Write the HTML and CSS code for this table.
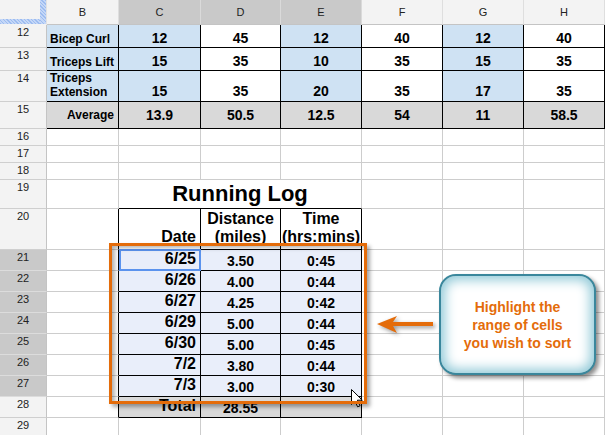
FILE: index.html
```html
<!DOCTYPE html>
<html>
<head>
<meta charset="utf-8">
<link rel="stylesheet" href="styles.css">
</head>
<body>
<div class="page">
  <div class="sheet">
    <!-- column headers -->
    <div class="c corner"></div>
    <div class="c h">B</div>
    <div class="c h hs">C</div>
    <div class="c h hs">D</div>
    <div class="c h hs">E</div>
    <div class="c h">F</div>
    <div class="c h">G</div>
    <div class="c h">H</div>

    <!-- row 12 -->
    <div class="c r">12</div>
    <div class="c t blue k">Bicep Curl</div>
    <div class="c n blue k">12</div>
    <div class="c n k">45</div>
    <div class="c n blue k">12</div>
    <div class="c n k">40</div>
    <div class="c n blue k">12</div>
    <div class="c n k">40</div>

    <!-- row 13 -->
    <div class="c r">13</div>
    <div class="c t blue k">Triceps Lift</div>
    <div class="c n blue k">15</div>
    <div class="c n k">35</div>
    <div class="c n blue k">10</div>
    <div class="c n k">35</div>
    <div class="c n blue k">15</div>
    <div class="c n k">35</div>

    <!-- row 14 -->
    <div class="c r">14</div>
    <div class="c t blue k low"><span>Triceps<br>Extension</span></div>
    <div class="c n blue k low">15</div>
    <div class="c n k low">35</div>
    <div class="c n blue k low">20</div>
    <div class="c n k low">35</div>
    <div class="c n blue k low">17</div>
    <div class="c n k low">35</div>

    <!-- row 15 -->
    <div class="c r">15</div>
    <div class="c t gray k mid ra">Average</div>
    <div class="c n gray k mid">13.9</div>
    <div class="c n gray k mid">50.5</div>
    <div class="c n gray k mid">12.5</div>
    <div class="c n gray k mid">54</div>
    <div class="c n gray k mid">11</div>
    <div class="c n gray k mid">58.5</div>

    <!-- row 16 -->
    <div class="c r">16</div>
    <div class="c"></div><div class="c"></div><div class="c"></div><div class="c"></div><div class="c"></div><div class="c"></div><div class="c"></div>
    <!-- row 17 -->
    <div class="c r">17</div>
    <div class="c"></div><div class="c"></div><div class="c"></div><div class="c"></div><div class="c"></div><div class="c"></div><div class="c"></div>
    <!-- row 18 -->
    <div class="c r">18</div>
    <div class="c"></div><div class="c"></div><div class="c"></div><div class="c"></div><div class="c"></div><div class="c"></div><div class="c"></div>

    <!-- row 19 -->
    <div class="c r">19</div>
    <div class="c"></div>
    <div class="c title">Running Log</div>
    <div class="c"></div><div class="c"></div><div class="c"></div>

    <!-- row 20 -->
    <div class="c r">20</div>
    <div class="c kr"></div>
    <div class="c hd k ra">Date</div>
    <div class="c hd k wide"><span>Distance<br>(miles)</span></div>
    <div class="c hd k wide"><span>Time<br>(hrs:mins)</span></div>
    <div class="c"></div><div class="c"></div><div class="c"></div>

    <!-- rows 21-27 -->
    <div class="c r rs">21</div>
    <div class="c kr"></div>
    <div class="c dt k sel ra active">6/25</div>
    <div class="c dv k sel">3.50</div>
    <div class="c dv k sel">0:45</div>
    <div class="c"></div><div class="c"></div><div class="c"></div>

    <div class="c r rs">22</div>
    <div class="c kr"></div>
    <div class="c dt k sel ra">6/26</div>
    <div class="c dv k sel">4.00</div>
    <div class="c dv k sel">0:44</div>
    <div class="c"></div><div class="c"></div><div class="c"></div>

    <div class="c r rs">23</div>
    <div class="c kr"></div>
    <div class="c dt k sel ra">6/27</div>
    <div class="c dv k sel">4.25</div>
    <div class="c dv k sel">0:42</div>
    <div class="c"></div><div class="c"></div><div class="c"></div>

    <div class="c r rs">24</div>
    <div class="c kr"></div>
    <div class="c dt k sel ra">6/29</div>
    <div class="c dv k sel">5.00</div>
    <div class="c dv k sel">0:44</div>
    <div class="c"></div><div class="c"></div><div class="c"></div>

    <div class="c r rs">25</div>
    <div class="c kr"></div>
    <div class="c dt k sel ra">6/30</div>
    <div class="c dv k sel">5.00</div>
    <div class="c dv k sel">0:45</div>
    <div class="c"></div><div class="c"></div><div class="c"></div>

    <div class="c r rs">26</div>
    <div class="c kr"></div>
    <div class="c dt k sel ra">7/2</div>
    <div class="c dv k sel">3.80</div>
    <div class="c dv k sel">0:44</div>
    <div class="c"></div><div class="c"></div><div class="c"></div>

    <div class="c r rs">27</div>
    <div class="c kr"></div>
    <div class="c dt k sel ra">7/3</div>
    <div class="c dv k sel">3.00</div>
    <div class="c dv k sel">0:30</div>
    <div class="c"></div><div class="c"></div><div class="c"></div>

    <!-- row 28 -->
    <div class="c r">28</div>
    <div class="c kr"></div>
    <div class="c dt k gray ra">Total</div>
    <div class="c dv k gray">28.55</div>
    <div class="c dv k gray"></div>
    <div class="c"></div><div class="c"></div><div class="c"></div>

    <!-- row 29 -->
    <div class="c r">29</div>
    <div class="c"></div><div class="c"></div><div class="c"></div><div class="c"></div><div class="c"></div><div class="c"></div><div class="c"></div>
  </div>

  <svg class="cursor" width="14" height="20" viewBox="0 0 14 20">
    <path d="M1.5 1.5 L1.5 16.5 L5 13 L7.6 18.8 L10 17.8 L7.4 12.2 L12.3 12.2 Z" fill="#fff" stroke="#000" stroke-width="1" stroke-linejoin="miter"/>
  </svg>

  <div class="highlight"></div>

  <svg class="arrow" width="60" height="24" viewBox="0 0 60 24">
    <path d="M1 10 L21 2 L17 8 L57 8 L57 12 L17 12 L21 19 Z" fill="#e46c0a"/>
  </svg>

  <div class="callout">Highlight the<br>range of cells<br>you wish to sort</div>
</div>
</body>
</html>
```

FILE: styles.css
```css
* { box-sizing: border-box; }

html, body {
  margin: 0;
  padding: 0;
  background: #fff;
}

body {
  font-family: "Liberation Sans", Arial, sans-serif;
  color: #000;
}

.page {
  position: relative;
  width: 605px;
  height: 435px;
  overflow: hidden;
}

.sheet {
  display: grid;
  grid-template-columns: 47px 72px 82px 80px 81px 81px 81px 81px;
  grid-template-rows: 25px 23px 23px 31px 27px 17px 17px 17px 29px 41px repeat(8, 21px) 18px;
}

.c {
  border-right: 1px solid #cdcdcd;
  border-bottom: 1px solid #cdcdcd;
  display: flex;
  align-items: flex-end;
  justify-content: center;
  padding: 0 3px;
  font-weight: bold;
  white-space: nowrap;
  min-width: 0;
  background: #fff;
}

/* headers */
.corner {
  background-color: #f3f3f3;
  background-image:
    repeating-linear-gradient(45deg, #9dbcf0 0 1px, #c4d7f7 1px 2.5px),
    repeating-linear-gradient(45deg, #9dbcf0 0 1px, #c4d7f7 1px 2.5px);
  background-size: 6px 100%, 100% 5px;
  background-position: right top, left bottom;
  background-repeat: no-repeat;
  border-right-color: #e2e2e2;
  border-bottom-color: #f3f3f3;
}

.h {
  background: #f3f3f3;
  font-weight: normal;
  font-size: 11px;
  color: #222;
  align-items: center;
  border-right-color: #dedede;
  border-bottom-color: #c4c4c4;
}

.hs { background: #c9c9c9; border-right-color: #dadada; }

.r {
  background: #f3f3f3;
  font-weight: normal;
  font-size: 11px;
  line-height: 13px;
  color: #222;
  align-items: flex-start;
  padding-top: 1px;
  border-right-color: #c4c4c4;
  border-bottom-color: #cfcfcf;
}

.rs { background: #c9c9c9; border-bottom-color: #dcdcdc; }

/* cell content */
.t {
  justify-content: flex-start;
  font-size: 12px;
  line-height: 14px;
  padding-bottom: 1px;
}

.n {
  font-size: 14px;
  line-height: 15px;
  padding-bottom: 1px;
}

.low { padding-bottom: 2px; }
.t.low { line-height: 13.5px; }

.mid { align-items: center; padding-bottom: 0; }

.ra { justify-content: flex-end; padding-right: 4px; }

.blue { background: #cfe2f3; }
.gray { background: #d9d9d9; }
.sel { background: #e9eefa; }

.k { border-right-color: #000; border-bottom-color: #000; }
.kr { border-right-color: #000; }

.title {
  grid-column: span 3;
  font-size: 22px;
  line-height: 24px;
  align-items: center;
  border-bottom-color: #000;
}

.hd {
  font-size: 16px;
  line-height: 18px;
  padding-bottom: 3px;
  text-align: center;
}

.wide { padding-left: 0; padding-right: 0; }

.dt {
  font-size: 16px;
  line-height: 18px;
  padding-bottom: 2px;
}

.dv {
  font-size: 14px;
  line-height: 15px;
  padding-bottom: 1px;
}

.active { position: relative; }
.active::after {
  content: "";
  position: absolute;
  top: -1px;
  left: 0;
  right: -1px;
  bottom: -1px;
  border: 2px solid #5b93ee;
}

/* overlays */
.cursor {
  position: absolute;
  left: 350px;
  top: 388px;
}

.highlight {
  position: absolute;
  left: 109px;
  top: 243px;
  width: 258px;
  height: 161px;
  border: 3px solid #e46c0a;
  box-shadow: 3px 3px 4px rgba(0, 0, 0, 0.35), inset 4px 3px 4px -1px rgba(0, 0, 0, 0.3);
}

.arrow {
  position: absolute;
  left: 376px;
  top: 314px;
  filter: drop-shadow(2px 2px 2px rgba(0, 0, 0, 0.4));
}

.callout {
  position: absolute;
  left: 439px;
  top: 274px;
  width: 157px;
  height: 101px;
  border: 2px solid #3a879c;
  border-radius: 17px;
  background: #fff;
  box-shadow: inset 0 0 12px 4px #92cad8, 3px 3px 4px rgba(0, 0, 0, 0.45);
  display: flex;
  align-items: center;
  justify-content: center;
  text-align: center;
  color: #e46c0a;
  font-weight: bold;
  font-size: 14px;
  line-height: 18px;
}
```
